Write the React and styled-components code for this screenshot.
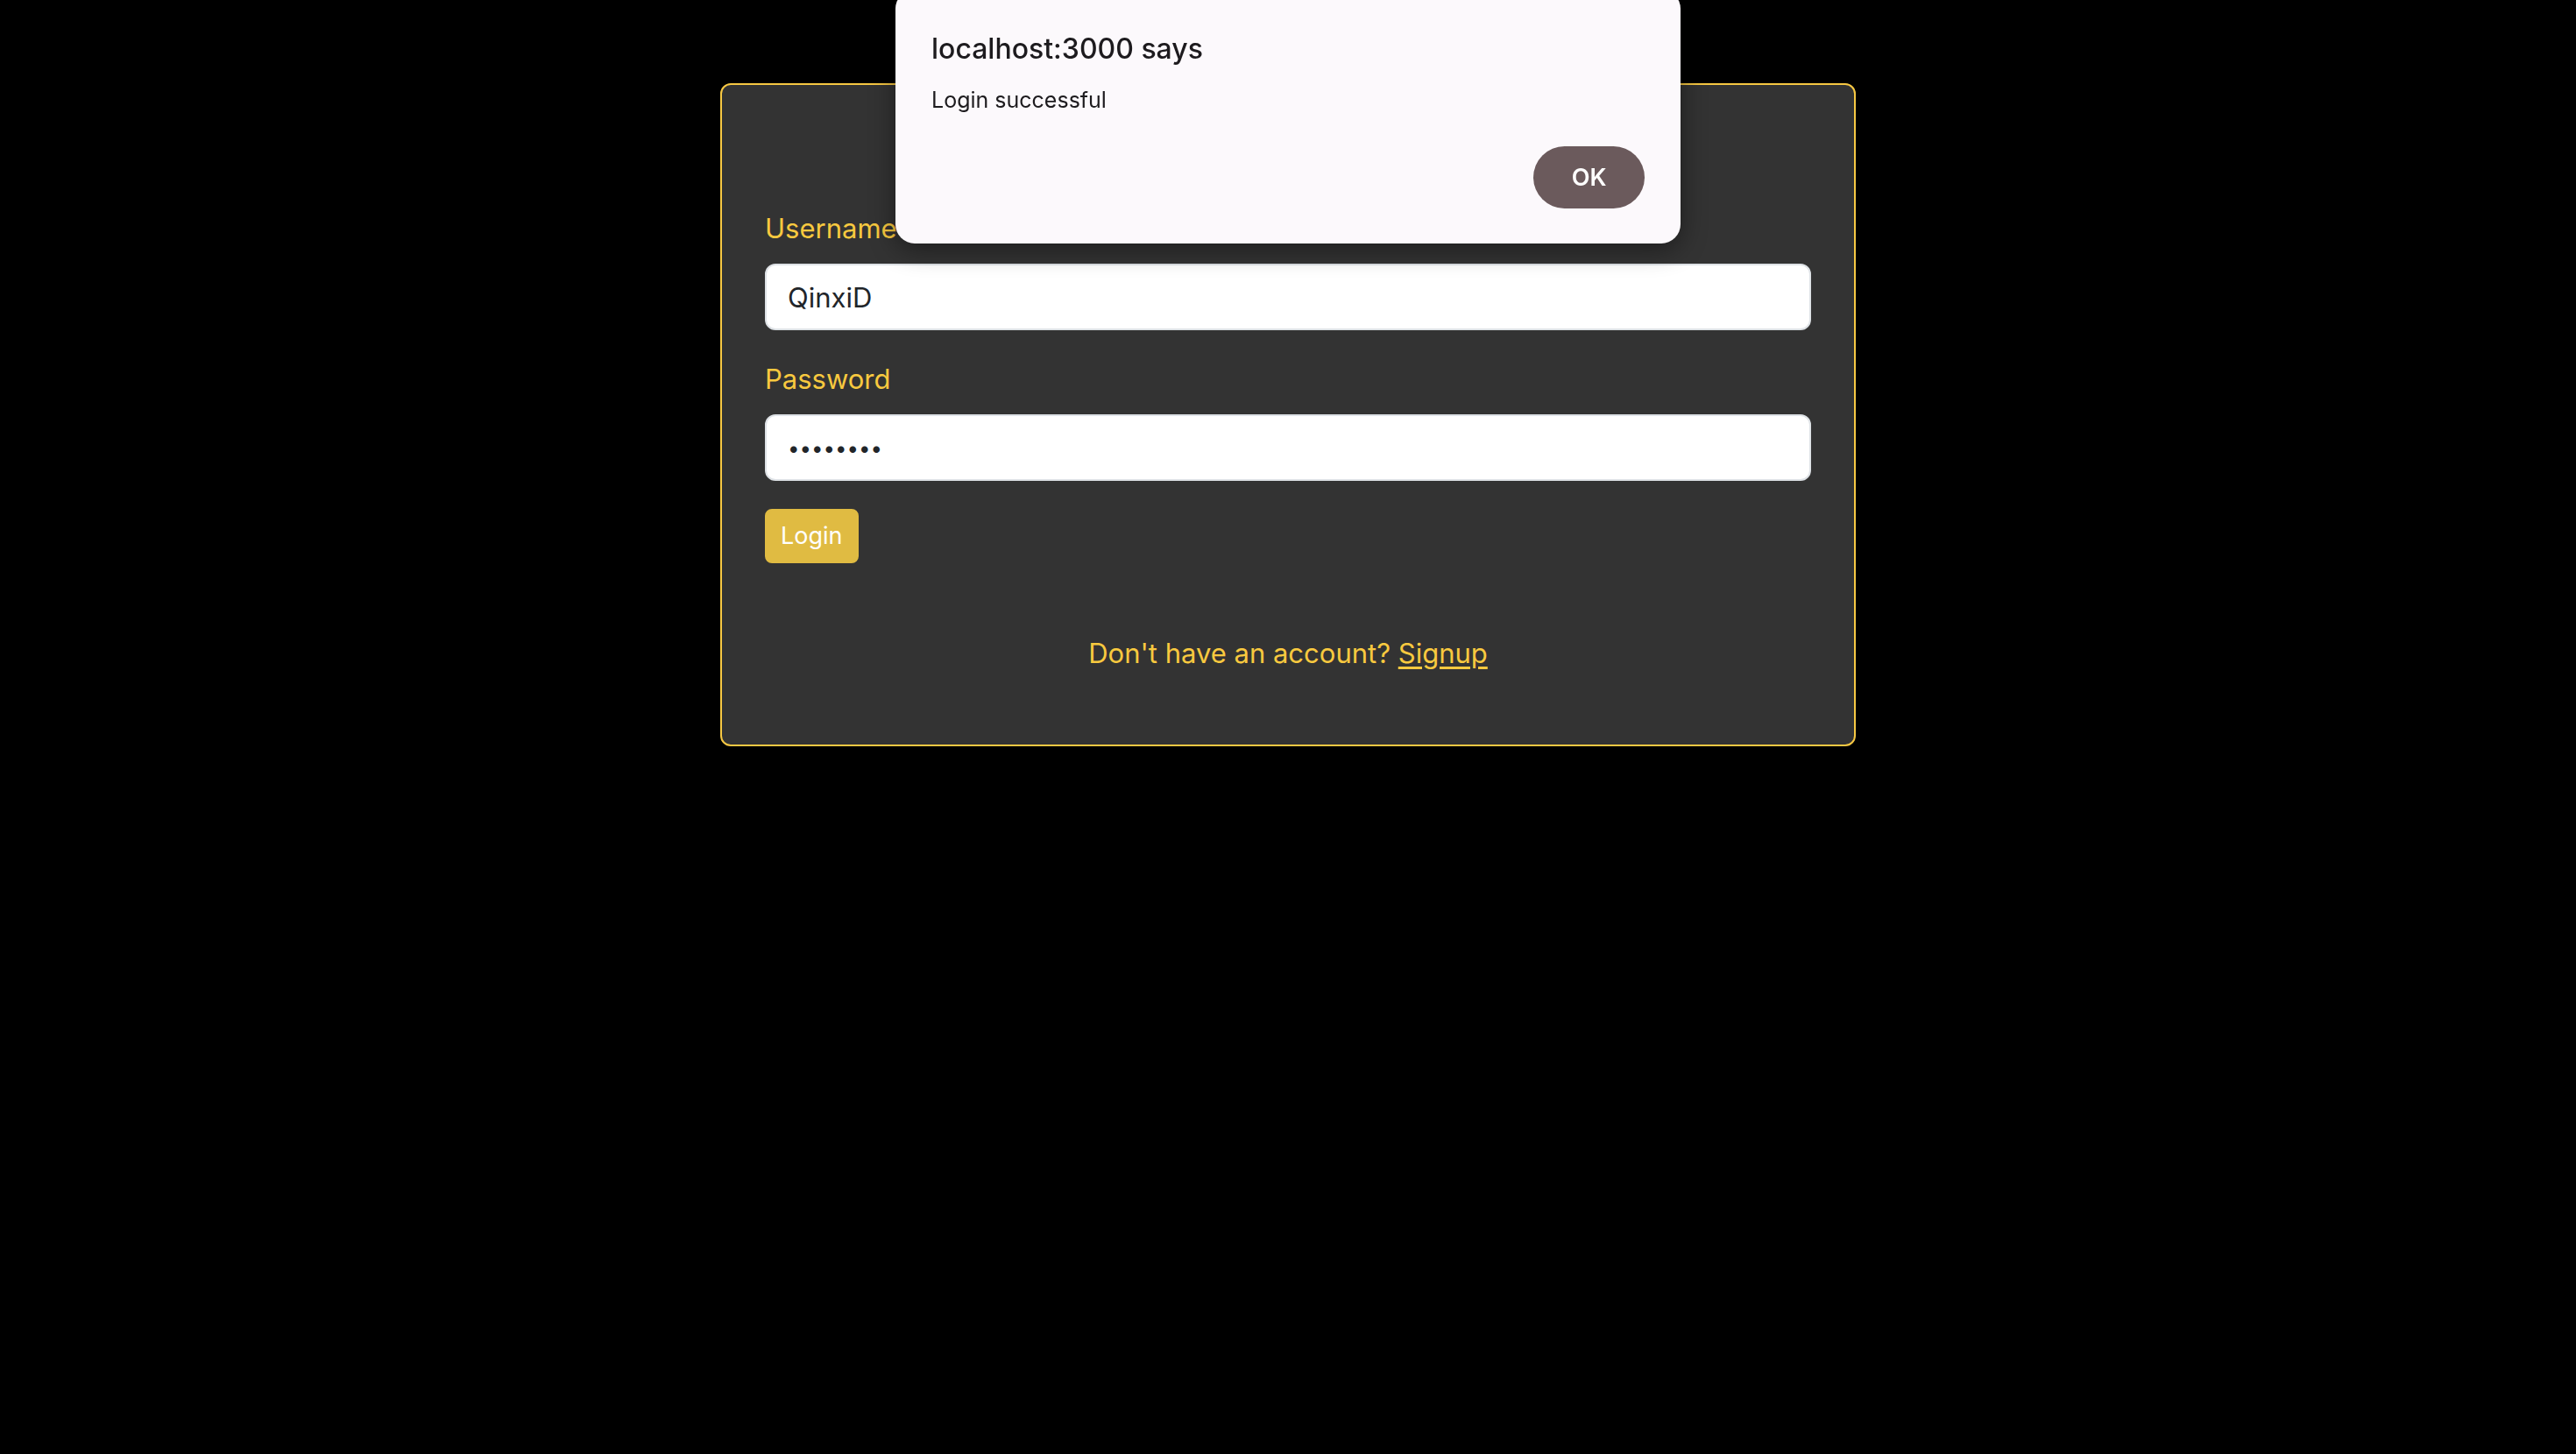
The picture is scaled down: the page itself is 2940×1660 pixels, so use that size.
import React from "react";
import styled, { createGlobalStyle } from "styled-components";

const Global = createGlobalStyle`
  html, body { margin: 0; padding: 0; background: #000; }
  body { font-family: Inter, "Noto Sans", "Liberation Sans", sans-serif; min-height: 100vh; }
  * { box-sizing: border-box; }
`;

const Page = styled.div`
  min-height: 1660px;
  background: #000;
  padding-top: 95px;
`;

const Card = styled.div`
  width: 1296px;
  margin: 0 auto;
  background: #333333;
  border: 2px solid #f7c843;
  border-radius: 12px;
  padding: 140px 49px 80px;
`;

const Field = styled.div`
  margin-bottom: 32px;
`;

const Label = styled.label`
  display: block;
  color: #f8c93f;
  font-size: 31px;
  line-height: 48px;
  margin-bottom: 16px;
`;

const Input = styled.input`
  display: block;
  width: 100%;
  height: 76px;
  padding: 12px 24px;
  font-family: Inter, "Noto Sans", sans-serif;
  font-size: ${(p) => (p.type === "password" ? "24px" : "31px")};
  line-height: 48px;
  color: #212529;
  background: #fff;
  border: 2px solid #dee2e6;
  border-radius: 12px;
  outline: none;
`;

const Button = styled.button`
  display: inline-block;
  font-family: Inter, "Noto Sans", sans-serif;
  font-size: 27px;
  line-height: 42px;
  padding: 8px 16px;
  color: #fff;
  background: #e0bb42;
  border: 2px solid #e0bb42;
  border-radius: 8px;
`;

const Footer = styled.p`
  margin: 79px 0 0;
  text-align: center;
  color: #f8c93f;
  font-size: 31px;
  line-height: 48px;
`;

const Link = styled.a`
  color: #f8c93f;
  text-decoration: underline;
  text-underline-offset: 4px;
`;

const Dialog = styled.div`
  position: fixed;
  top: -12px;
  left: 50%;
  transform: translateX(-50%);
  width: 896px;
  height: 290px;
  background: #fcf9fc;
  border-radius: 22px;
  box-shadow: 0 6px 30px rgba(0, 0, 0, 0.45);
  padding: 46px 41px 40px;
  display: flex;
  flex-direction: column;
`;

const DialogTitle = styled.div`
  font-size: 32px;
  font-weight: 500;
  line-height: 44px;
  color: #1d1b1e;
`;

const DialogText = styled.div`
  margin-top: 18px;
  font-size: 25px;
  line-height: 36px;
  color: #1d1b1e;
`;

const DialogActions = styled.div`
  margin-top: auto;
  display: flex;
  justify-content: flex-end;
`;

const OkButton = styled.button`
  width: 127px;
  height: 71px;
  border: none;
  border-radius: 36px;
  background: #6b5a5c;
  color: #fff;
  font-family: Inter, "Noto Sans", sans-serif;
  font-size: 27px;
  font-weight: 600;
`;

export default function App() {
  return (
    <>
      <Global />
      <Page>
        <Card>
          <Field>
            <Label>Username</Label>
            <Input type="text" defaultValue="QinxiD" />
          </Field>
          <Field>
            <Label>Password</Label>
            <Input type="password" defaultValue="password" />
          </Field>
          <Button>Login</Button>
          <Footer>
            Don't have an account? <Link href="#">Signup</Link>
          </Footer>
        </Card>
      </Page>
      <Dialog>
        <DialogTitle>localhost:3000 says</DialogTitle>
        <DialogText>Login successful</DialogText>
        <DialogActions>
          <OkButton>OK</OkButton>
        </DialogActions>
      </Dialog>
    </>
  );
}
